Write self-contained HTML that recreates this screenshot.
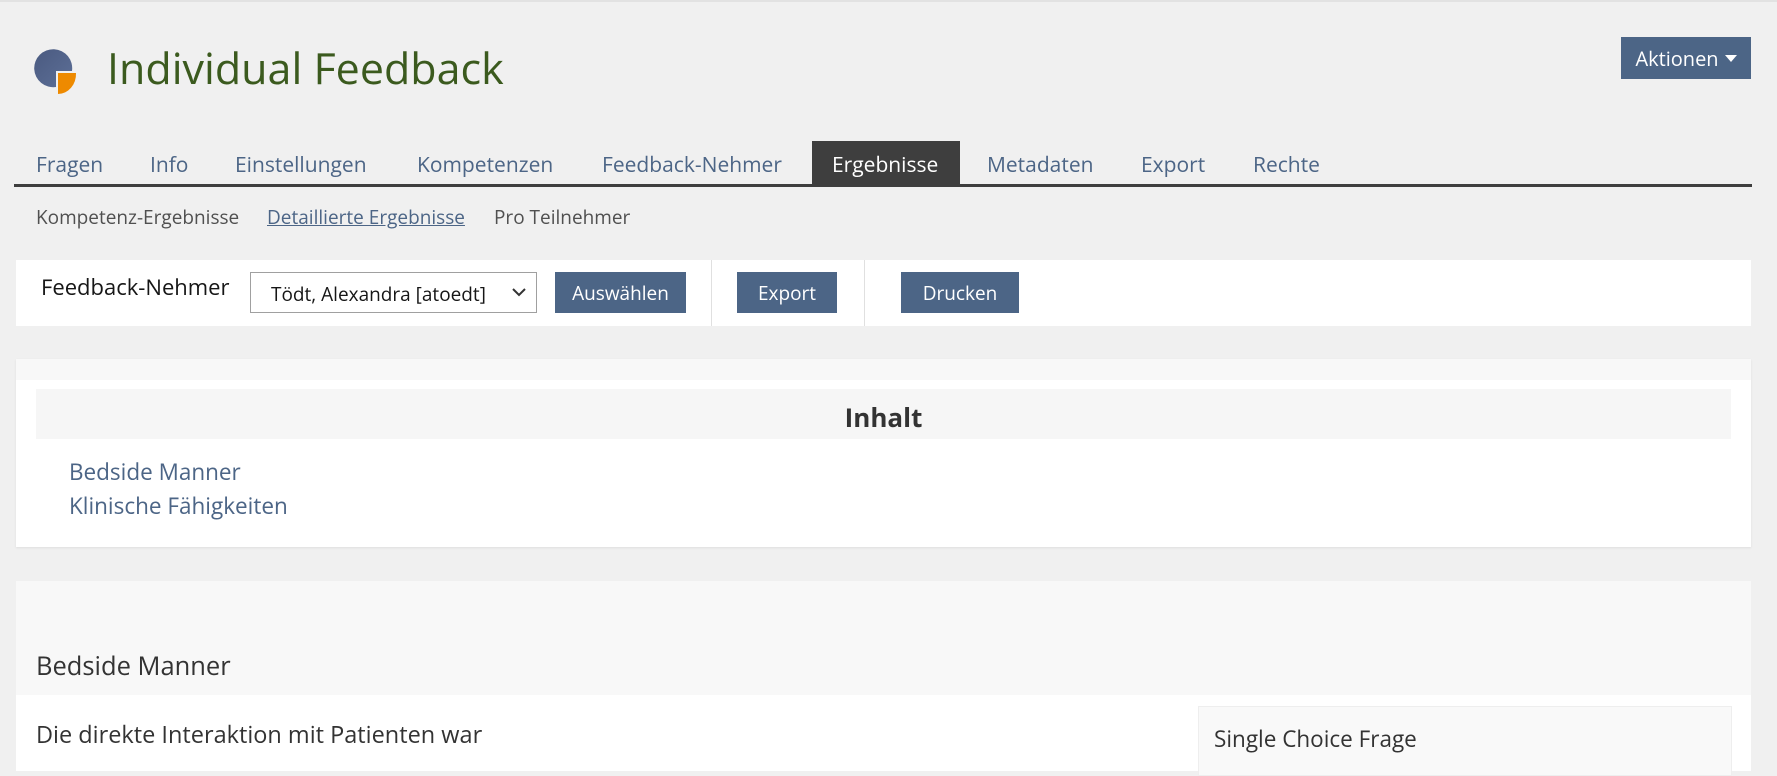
<!DOCTYPE html>
<html><head><meta charset="utf-8"><style>
*{margin:0;padding:0;box-sizing:border-box}
body{width:1777px;height:763px;overflow:hidden;background:#f0f0f0;font-family:"Open Sans","Liberation Sans",sans-serif;color:#161616;position:relative}
.a{position:absolute;white-space:nowrap}
.btn{position:absolute;background:#4c6586;color:#fff;font-size:19px;display:flex;align-items:center;justify-content:center}
.tab{position:absolute;top:151px;font-size:21px;color:#4c6586}
.sub{position:absolute;top:204px;font-size:19px;color:#505050}
</style></head><body>
<div class="a" style="left:0;top:0;width:1777px;height:2px;background:#e2e2e2"></div>
<svg class="a" style="left:34px;top:46px" width="44" height="50" viewBox="0 0 44 50">
<defs><linearGradient id="g" x1="0" y1="0" x2="1" y2="1"><stop offset="0" stop-color="#4a5a80"/><stop offset="1" stop-color="#5d6f97"/></linearGradient></defs>
<path d="M38 25 A19 19 0 1 0 22 41 L22 25 Z" fill="url(#g)"/>
<path d="M24 27 L42 27 A18 20 0 0 1 24 48 Z" fill="#ee8a00"/>
</svg>
<div class="a" style="left:107px;top:38px;font-size:43px;color:#3b5a1e">Individual Feedback</div>
<div class="btn" style="left:1621px;top:37px;width:130px;height:42px;font-size:20px">Aktionen <svg style="margin-left:6px" width="12" height="7"><path d="M0 0 L12 0 L6 7 Z" fill="#fff"/></svg></div>

<div class="a" style="left:812px;top:141px;width:148px;height:44px;background:#3e3e3e"></div>
<div class="a" style="left:14px;top:184px;width:1738px;height:3px;background:#3e3e3e"></div>
<div class="tab" style="left:36px">Fragen</div>
<div class="tab" style="left:150px">Info</div>
<div class="tab" style="left:235px">Einstellungen</div>
<div class="tab" style="left:417px">Kompetenzen</div>
<div class="tab" style="left:602px">Feedback-Nehmer</div>
<div class="tab" style="left:832px;color:#fff">Ergebnisse</div>
<div class="tab" style="left:987px">Metadaten</div>
<div class="tab" style="left:1141px">Export</div>
<div class="tab" style="left:1253px">Rechte</div>

<div class="sub" style="left:36px">Kompetenz-Ergebnisse</div>
<div class="sub" style="left:267px;color:#4c6586;text-decoration:underline">Detaillierte Ergebnisse</div>
<div class="sub" style="left:494px">Pro Teilnehmer</div>

<div class="a" style="left:16px;top:260px;width:1735px;height:66px;background:#fff"></div>
<div class="a" style="left:41px;top:272px;font-size:22px">Feedback-Nehmer</div>
<div class="a" style="left:250px;top:272px;width:287px;height:41px;border:1px solid #a0a0a0;background:#fff;font-size:19px;padding:8px 0 0 20px">Tödt, Alexandra [atoedt]
<svg style="position:absolute;right:10px;top:15px" width="14" height="9"><path d="M1 1 L7 7 L13 1" stroke="#333" stroke-width="2" fill="none"/></svg></div>
<div class="btn" style="left:555px;top:272px;width:131px;height:41px">Auswählen</div>
<div class="a" style="left:711px;top:260px;width:1px;height:66px;background:#e0e0e0"></div>
<div class="btn" style="left:737px;top:272px;width:100px;height:41px">Export</div>
<div class="a" style="left:864px;top:260px;width:1px;height:66px;background:#e0e0e0"></div>
<div class="btn" style="left:901px;top:272px;width:118px;height:41px">Drucken</div>

<div class="a" style="left:16px;top:359px;width:1735px;height:188px;background:#fff;box-shadow:0 1px 2px #ddd"></div>
<div class="a" style="left:16px;top:359px;width:1735px;height:21px;background:#f8f8f8"></div>
<div class="a" style="left:36px;top:389px;width:1695px;height:50px;background:#f6f6f6;text-align:center;font-size:26px;font-weight:bold;color:#333;padding-top:10px">Inhalt</div>
<div class="a" style="left:69px;top:455px;font-size:22.5px;color:#4c6586;line-height:34px">Bedside Manner<br>Klinische Fähigkeiten</div>

<div class="a" style="left:16px;top:581px;width:1735px;height:190px;background:#fff"></div>
<div class="a" style="left:16px;top:581px;width:1735px;height:114px;background:#f8f8f8"></div>
<div class="a" style="left:36px;top:649px;font-size:25.5px;color:#333">Bedside Manner</div>
<div class="a" style="left:36px;top:718px;font-size:23.5px;color:#333">Die direkte Interaktion mit Patienten war</div>
<div class="a" style="left:1198px;top:706px;width:534px;height:70px;background:#f9f9f9;border:1px solid #eee"></div>
<div class="a" style="left:1214px;top:723px;font-size:22.5px;color:#333">Single Choice Frage</div>
</body></html>
